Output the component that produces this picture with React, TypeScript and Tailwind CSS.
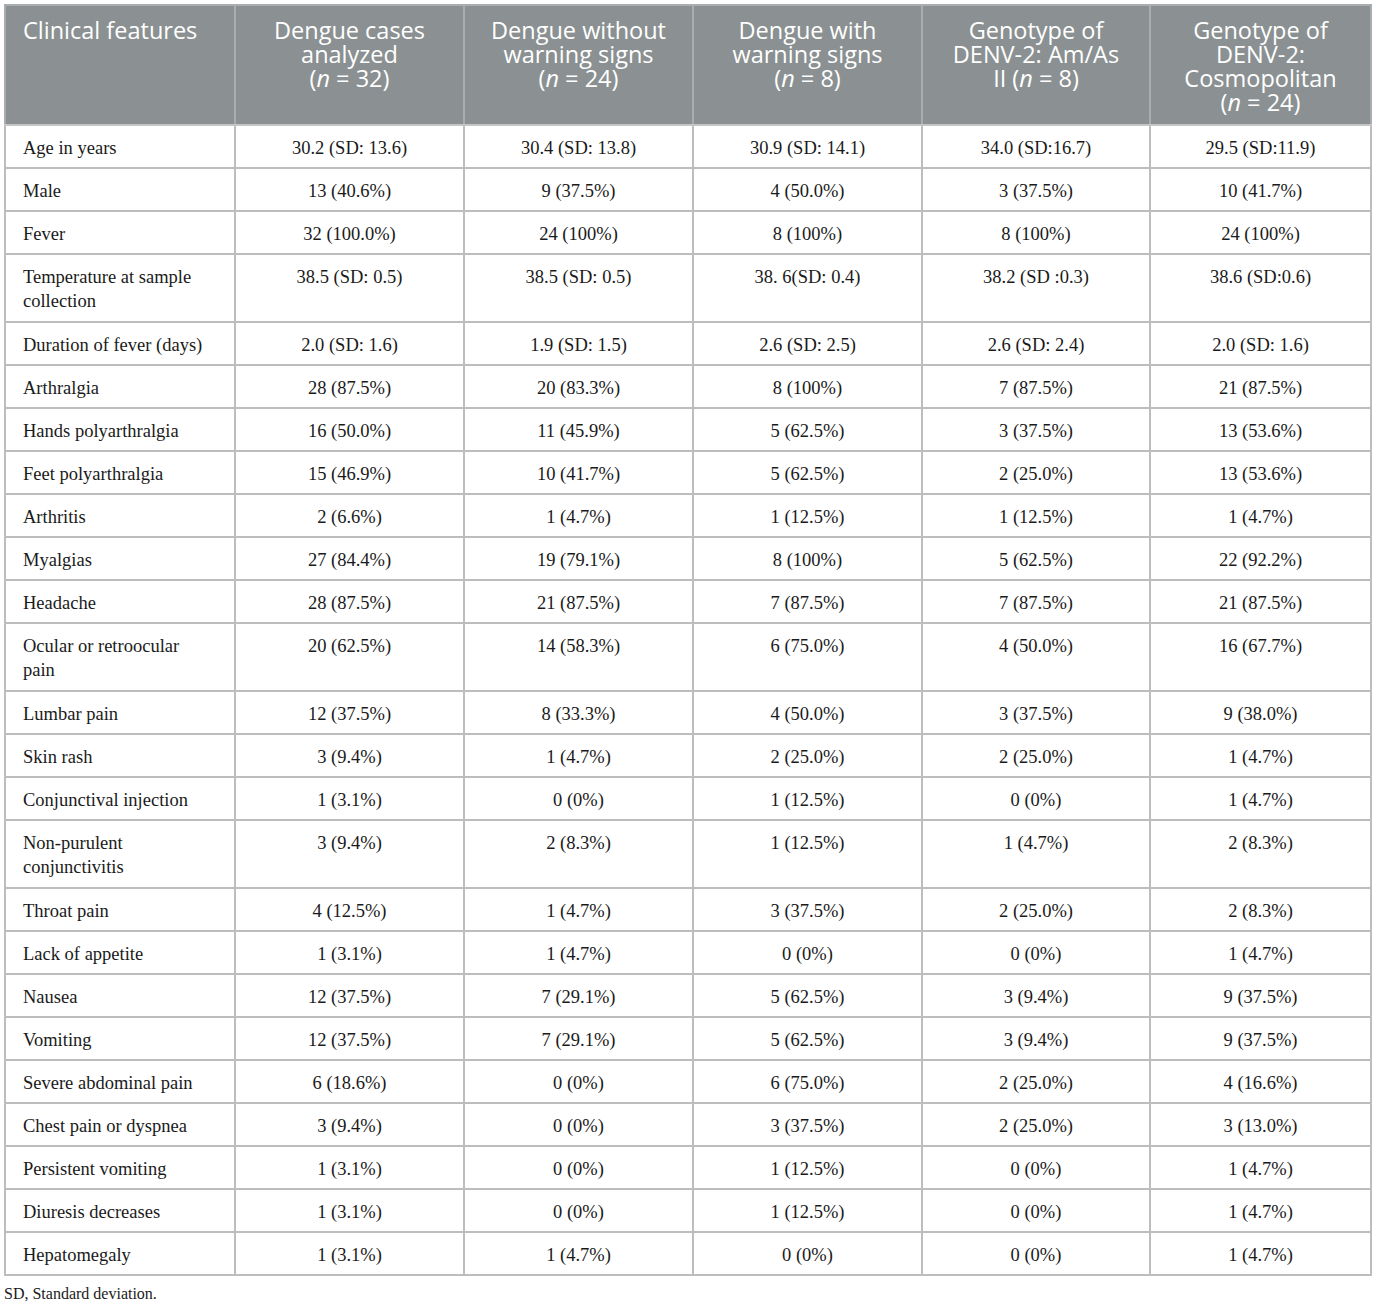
import React from 'react'

type Row = { label: string; values: string[] }

const rows: Row[] = [
  { label: 'Age in years', values: ['30.2 (SD: 13.6)', '30.4 (SD: 13.8)', '30.9 (SD: 14.1)', '34.0 (SD:16.7)', '29.5 (SD:11.9)'] },
  { label: 'Male', values: ['13 (40.6%)', '9 (37.5%)', '4 (50.0%)', '3 (37.5%)', '10 (41.7%)'] },
  { label: 'Fever', values: ['32 (100.0%)', '24 (100%)', '8 (100%)', '8 (100%)', '24 (100%)'] },
  { label: 'Temperature at sample collection', values: ['38.5 (SD: 0.5)', '38.5 (SD: 0.5)', '38. 6(SD: 0.4)', '38.2 (SD :0.3)', '38.6 (SD:0.6)'] },
  { label: 'Duration of fever (days)', values: ['2.0 (SD: 1.6)', '1.9 (SD: 1.5)', '2.6 (SD: 2.5)', '2.6 (SD: 2.4)', '2.0 (SD: 1.6)'] },
  { label: 'Arthralgia', values: ['28 (87.5%)', '20 (83.3%)', '8 (100%)', '7 (87.5%)', '21 (87.5%)'] },
  { label: 'Hands polyarthralgia', values: ['16 (50.0%)', '11 (45.9%)', '5 (62.5%)', '3 (37.5%)', '13 (53.6%)'] },
  { label: 'Feet polyarthralgia', values: ['15 (46.9%)', '10 (41.7%)', '5 (62.5%)', '2 (25.0%)', '13 (53.6%)'] },
  { label: 'Arthritis', values: ['2 (6.6%)', '1 (4.7%)', '1 (12.5%)', '1 (12.5%)', '1 (4.7%)'] },
  { label: 'Myalgias', values: ['27 (84.4%)', '19 (79.1%)', '8 (100%)', '5 (62.5%)', '22 (92.2%)'] },
  { label: 'Headache', values: ['28 (87.5%)', '21 (87.5%)', '7 (87.5%)', '7 (87.5%)', '21 (87.5%)'] },
  { label: 'Ocular or retroocular pain', values: ['20 (62.5%)', '14 (58.3%)', '6 (75.0%)', '4 (50.0%)', '16 (67.7%)'] },
  { label: 'Lumbar pain', values: ['12 (37.5%)', '8 (33.3%)', '4 (50.0%)', '3 (37.5%)', '9 (38.0%)'] },
  { label: 'Skin rash', values: ['3 (9.4%)', '1 (4.7%)', '2 (25.0%)', '2 (25.0%)', '1 (4.7%)'] },
  { label: 'Conjunctival injection', values: ['1 (3.1%)', '0 (0%)', '1 (12.5%)', '0 (0%)', '1 (4.7%)'] },
  { label: 'Non-purulent conjunctivitis', values: ['3 (9.4%)', '2 (8.3%)', '1 (12.5%)', '1 (4.7%)', '2 (8.3%)'] },
  { label: 'Throat pain', values: ['4 (12.5%)', '1 (4.7%)', '3 (37.5%)', '2 (25.0%)', '2 (8.3%)'] },
  { label: 'Lack of appetite', values: ['1 (3.1%)', '1 (4.7%)', '0 (0%)', '0 (0%)', '1 (4.7%)'] },
  { label: 'Nausea', values: ['12 (37.5%)', '7 (29.1%)', '5 (62.5%)', '3 (9.4%)', '9 (37.5%)'] },
  { label: 'Vomiting', values: ['12 (37.5%)', '7 (29.1%)', '5 (62.5%)', '3 (9.4%)', '9 (37.5%)'] },
  { label: 'Severe abdominal pain', values: ['6 (18.6%)', '0 (0%)', '6 (75.0%)', '2 (25.0%)', '4 (16.6%)'] },
  { label: 'Chest pain or dyspnea', values: ['3 (9.4%)', '0 (0%)', '3 (37.5%)', '2 (25.0%)', '3 (13.0%)'] },
  { label: 'Persistent vomiting', values: ['1 (3.1%)', '0 (0%)', '1 (12.5%)', '0 (0%)', '1 (4.7%)'] },
  { label: 'Diuresis decreases', values: ['1 (3.1%)', '0 (0%)', '1 (12.5%)', '0 (0%)', '1 (4.7%)'] },
  { label: 'Hepatomegaly', values: ['1 (3.1%)', '1 (4.7%)', '0 (0%)', '0 (0%)', '1 (4.7%)'] },
]

// rows whose label wraps onto a second line in the reference
const twoLine = new Set(['Temperature at sample collection', 'Ocular or retroocular pain', 'Non-purulent conjunctivitis'])

const N = ({ v }: { v: string }) => (
  <>
    (<i>n</i> = {v})
  </>
)

const headers: React.ReactNode[] = [
  <>Dengue cases<br />analyzed<br /><N v="32" /></>,
  <>Dengue without<br />warning signs<br /><N v="24" /></>,
  <>Dengue with<br />warning signs<br /><N v="8" /></>,
  <>Genotype of<br />DENV-2: Am/As<br />II <N v="8" /></>,
  <>Genotype of<br />DENV-2:<br />Cosmopolitan<br /><N v="24" /></>,
]

export default function App() {
  const serif = "font-['Liberation_Serif',serif]"
  return (
    <div className="bg-white w-[1375px] h-[1305px] pl-[4px] pt-[4px]">
      <table className="table-fixed border-collapse w-[1366px] border-2 border-[#bdbdbd]">
        <colgroup>
          <col className="w-[230px]" />
          <col className="w-[229px]" />
          <col className="w-[229px]" />
          <col className="w-[229px]" />
          <col className="w-[228px]" />
          <col className="w-[221px]" />
        </colgroup>
        <thead>
          <tr className="bg-[#8b9192] text-white font-['Open_Sans',sans-serif] text-[23.5px] leading-[24px]">
            <th className="h-[120px] align-top text-left font-normal pl-[17px] pt-[12px] whitespace-nowrap border-2 border-[#a9adae] border-b-[#c4c6c6]">
              Clinical features
            </th>
            {headers.map((h, i) => (
              <th
                key={i}
                className="align-top text-center font-normal px-1 pt-[12px] whitespace-nowrap border-2 border-[#a9adae] border-b-[#c4c6c6]"
              >
                {h}
              </th>
            ))}
          </tr>
        </thead>
        <tbody className={`${serif} text-[18.5px] leading-[24px] text-[#1a1a1a]`}>
          {rows.map((r) => {
            const wrap = twoLine.has(r.label)
            const pad = wrap ? 'pt-[10px] pb-[8px]' : 'pt-[10px] pb-[7px]'
            return (
              <tr key={r.label}>
                <td
                  className={`align-top text-left pl-[17px] border-2 border-[#bdbdbd] ${pad} ${
                    wrap ? 'pr-[30px]' : 'pr-1 whitespace-nowrap'
                  }`}
                >
                  {r.label}
                </td>
                {r.values.map((v, i) => (
                  <td key={i} className={`align-top text-center px-2 border-2 border-[#bdbdbd] ${pad}`}>
                    {v}
                  </td>
                ))}
              </tr>
            )
          })}
        </tbody>
      </table>
      <div className={`${serif} text-[16px] leading-[22px] text-[#1a1a1a] mt-[7px]`}>SD, Standard deviation.</div>
    </div>
  )
}
